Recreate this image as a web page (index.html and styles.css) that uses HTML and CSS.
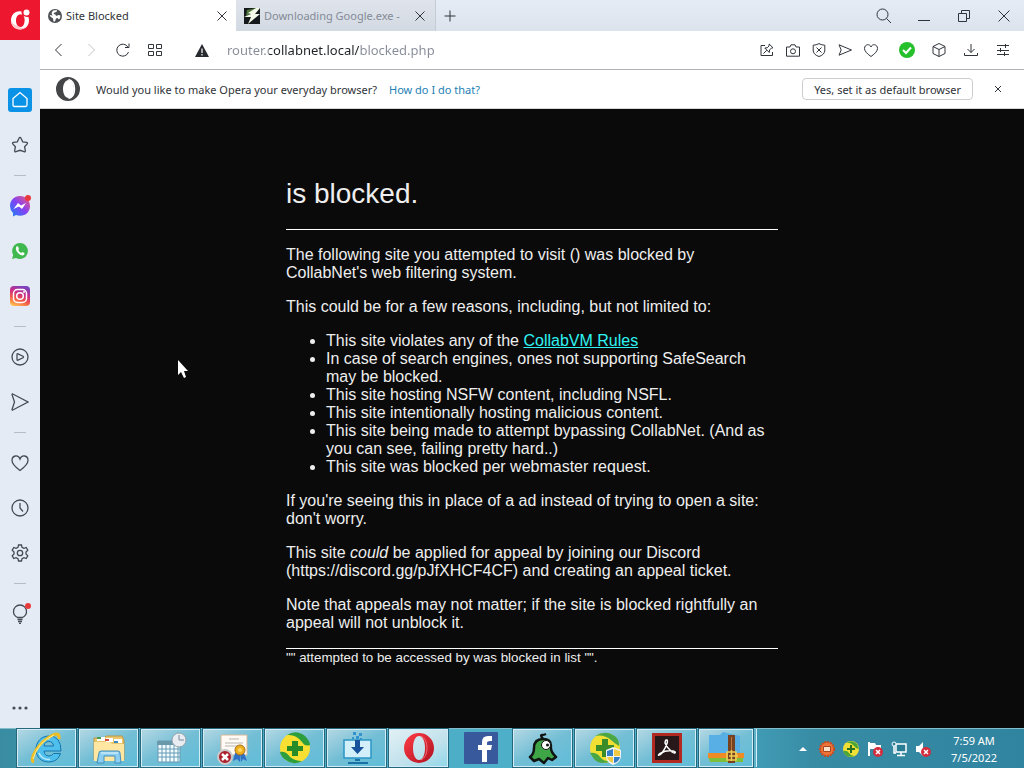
FILE: index.html
```html
<!DOCTYPE html>
<html lang="en">
  <head>
    <meta charset="UTF-8" />
    <meta name="viewport" content="width=device-width, initial-scale=1.0" />
    <title>Site Blocked</title>
    <link rel="stylesheet" href="styles.css">
  </head>
  <body>
    <div class="browser">
      <nav class="sidebar">
        <button class="opera-menu" aria-label="Opera menu">
          <svg width="40" height="40" viewBox="0 0 40 40">
            <path fill="#fff" fill-rule="evenodd" d="M21.500 11.500C14.500 10.500 11 15.500 11 20.500C11 25.500 15 29.500 20 29.500C25.500 29.500 29 25.500 29 20.500Q29 18.500 28.300 16.800Q25 17.500 23.500 15.500C24.800 18 24.800 20 24.500 22C24 25.500 22.500 27 20.500 27C17.500 27 16 24 16 20.500C16 17 18 14.200 20.500 14.200Q21.500 14.200 22.300 14.700Q21.200 13 21.500 11.500Z"/>
            <path fill="#ffc9c9" d="M11 20.500C11 25.500 15 29.500 20 29.500Q23 29.500 25.500 27.500Q20 29 17 25.500Q13 25 11 20.500Z"/>
            <circle cx="26.500" cy="12.500" r="3" fill="#fff"/>
          </svg>
        </button>
        <button class="side-item home" aria-label="Speed Dial">
          <svg width="24" height="24" viewBox="0 0 24 24"><path d="M5 10.500L12 4.500L19 10.500V17Q19 18.500 17.500 18.500H6.500Q5 18.500 5 17Z"/></svg>
        </button>
        <button class="side-item" aria-label="Bookmarks">
          <svg width="18" height="18" viewBox="0 0 18 18"><path d="M9 1.500Q9.700 1.500 10 2.200L11.700 5.800L15.700 6.400Q17 6.800 16.200 7.900L13.600 10.700L14.300 14.700Q14.400 16.200 13 15.600L9 14.300L5 15.600Q3.600 16.200 3.700 14.700L4.400 10.700L1.800 7.900Q1 6.800 2.300 6.400L6.300 5.800L8 2.200Q8.300 1.500 9 1.500Z"/></svg>
        </button>
        <hr />
        <button class="side-item" aria-label="Messenger">
          <svg class="filled" width="22" height="22" viewBox="0 0 22 22">
            <defs><linearGradient id="messenger" x1="0" y1="1" x2="1" y2="0"><stop offset="0" stop-color="#1687fa"/><stop offset=".5" stop-color="#8142f4"/><stop offset="1" stop-color="#fa5878"/></linearGradient></defs>
            <path fill="url(#messenger)" d="M11 1C5 1 1 5.500 1 11Q1 15 4 18V21.500L7 20Q9 20.800 11 20.800C17 20.800 21 16.500 21 11S17 1 11 1Z"/>
            <path fill="#fff" d="M4.500 14L9 8L12 10.500L17 8L13 14L10 11.500Z"/>
          </svg>
          <span class="dot"></span>
        </button>
        <button class="side-item" aria-label="WhatsApp">
          <svg class="filled" width="18" height="18" viewBox="0 0 18 18">
            <path fill="#3fb94f" d="M9 1A8 8 0 1 1 5 16L1 17L2.200 13A8 8 0 0 1 9 1Z"/>
            <path fill="#fff" d="M5.500 4.500L7 4.300L8 7L7.200 8Q8 10 10.200 11L11.200 10L13.500 11L13.200 12.700Q11 14.500 7.500 11.500Q3.500 8 5.500 4.500Z"/>
          </svg>
        </button>
        <button class="side-item" aria-label="Instagram">
          <svg class="filled" width="20" height="20" viewBox="0 0 20 20">
            <defs><linearGradient id="insta" x1=".2" y1="1" x2=".6" y2="0"><stop offset="0" stop-color="#ffc253"/><stop offset=".35" stop-color="#f35a45"/><stop offset=".65" stop-color="#cb2c89"/><stop offset="1" stop-color="#7942be"/></linearGradient></defs>
            <rect width="20" height="20" rx="4" fill="url(#insta)"/>
            <rect x="3.500" y="3.500" width="13" height="13" rx="4" fill="none" stroke="#fff" stroke-width="1.500"/>
            <circle cx="10" cy="10" r="3.300" fill="none" stroke="#fff" stroke-width="1.500"/>
            <circle cx="14" cy="6" r="1" fill="#fff"/>
          </svg>
        </button>
        <hr />
        <button class="side-item" aria-label="Player">
          <svg width="18" height="18" viewBox="0 0 18 18"><circle cx="9" cy="9" r="8"/><path d="M6 6.500Q6 5.500 7 5.800L12 8.200Q13 9 12 9.800L7 12.200Q6 12.500 6 11.500Z"/></svg>
        </button>
        <button class="side-item" aria-label="My Flow">
          <svg width="18" height="18" viewBox="0 0 18 18"><path d="M1 1.500Q1 .800 1.800 1L17 9L1.800 17Q1 17.200 1 16.500L3.500 9Z"/></svg>
        </button>
        <hr />
        <button class="side-item" aria-label="Pinboards">
          <svg width="18" height="18" viewBox="0 0 18 18"><path d="M9 16.500Q1 10.500 1 6.500C1 1 7.500 .500 9 5C10.500 .500 17 1 17 6.500Q17 10.500 9 16.500Z"/></svg>
        </button>
        <button class="side-item" aria-label="History">
          <svg width="18" height="18" viewBox="0 0 18 18"><circle cx="9" cy="9" r="8"/><path d="M9 4V9L12 12.500"/></svg>
        </button>
        <button class="side-item" aria-label="Settings">
          <svg width="18" height="18" viewBox="0 0 18 18"><path d="M7.500 1H10.500L11 3.300L13 4.300L15.200 3.500L16.800 6.200L15 8V10L16.800 11.800L15.200 14.500L13 13.700L11 14.700L10.500 17H7.500L7 14.700L5 13.700L2.800 14.500L1.200 11.800L3 10V8L1.200 6.200L2.800 3.500L5 4.300L7 3.300Z"/><circle cx="9" cy="9" r="2.700"/></svg>
        </button>
        <hr />
        <button class="side-item" aria-label="Tips">
          <svg width="18" height="20" viewBox="0 0 18 20"><path d="M6.500 13.500Q2.500 11.500 2.500 7.500A6.500 6.500 0 0 1 15.500 7.500Q15.500 11.500 11.500 13.500ZM6.500 15.500H11.500M7 17.500H11M8 19.500H10"/></svg>
          <span class="dot"></span>
        </button>
        <button class="side-item more" aria-label="More">
          <svg class="filled" width="18" height="4" viewBox="0 0 18 4"><circle cx="3" cy="2" r="1.600"/><circle cx="9" cy="2" r="1.600"/><circle cx="15" cy="2" r="1.600"/></svg>
        </button>
      </nav>

      <div class="main">
        <header class="tab-strip">
          <div class="tab active">
            <svg class="favicon" width="14" height="14" viewBox="0 0 14 14"><circle cx="7" cy="7" r="7" fill="#4c4f53"/><path fill="#fff" d="M5 1.500L9 1L8.500 3L6.500 3.500L5.500 5L7.500 5.500L8 7L10.500 6L12.500 6.500Q12.500 9 11 10.500L9.500 9L8 9.500L7 12.500H5.500L5 9.500L3 8L1.500 6.500L3 6L4.500 7L3.500 4Z"/></svg>
            <span class="tab-title">Site Blocked</span>
            <button class="tab-close" aria-label="Close tab"><svg width="10" height="10" viewBox="0 0 10 10"><path d="M.500 .500L9.500 9.500M9.500 .500L.500 9.500"/></svg></button>
          </div>
          <div class="tab">
            <svg class="favicon" width="16" height="16" viewBox="0 0 16 16"><rect width="16" height="16" fill="#151b1d"/><path fill="#51773f" d="M3 2L12 0L9 5L2 8Z"/><path fill="#f4fbe9" d="M12 0H16L11 6H16L4 16L7 9H0L7 6L4 5Z"/></svg>
            <span class="tab-title">Downloading Google.exe -</span>
            <button class="tab-close" aria-label="Close tab"><svg width="10" height="10" viewBox="0 0 10 10"><path d="M.500 .500L9.500 9.500M9.500 .500L.500 9.500"/></svg></button>
          </div>
          <button class="new-tab" aria-label="New tab"><svg width="12" height="12" viewBox="0 0 12 12"><path d="M6 .500V11.500M.500 6H11.500"/></svg></button>
          <div class="window-controls">
            <button aria-label="Search tabs"><svg width="16" height="16" viewBox="0 0 16 16"><circle cx="6.500" cy="6.500" r="5.500"/><path d="M10.500 10.500L15 15"/></svg></button>
            <button aria-label="Minimize"><svg width="12" height="12" viewBox="0 0 12 12"><path d="M0 10.500H12"/></svg></button>
            <button aria-label="Restore"><svg width="12" height="12" viewBox="0 0 12 12"><path d="M.500 3.500H8.500V11.500H.500ZM3.500 3V.500H11.500V8.500H9"/></svg></button>
            <button aria-label="Close"><svg width="12" height="12" viewBox="0 0 12 12"><path d="M.500 .500L11.500 11.500M11.500 .500L.500 11.500"/></svg></button>
          </div>
        </header>

        <div class="toolbar">
          <div class="nav-buttons">
            <button aria-label="Back"><svg width="14" height="14" viewBox="0 0 14 14"><path d="M9.500 1L3.500 7L9.500 13"/></svg></button>
            <button aria-label="Forward" disabled><svg width="14" height="14" viewBox="0 0 14 14"><path d="M4.500 1L10.500 7L4.500 13"/></svg></button>
            <button aria-label="Reload"><svg width="14" height="14" viewBox="0 0 14 14"><path d="M12.500 9A6 6 0 1 1 12 4.200M13 .500V4.500H9"/></svg></button>
            <button aria-label="Speed dial"><svg width="14" height="12" viewBox="0 0 14 12"><path d="M.500 .500H5.500V4.500H.500ZM8.500 .500H13.500V4.500H8.500ZM.500 7.500H5.500V11.500H.500ZM8.500 7.500H13.500V11.500H8.500Z"/></svg></button>
          </div>
          <svg class="warning" width="14" height="13" viewBox="0 0 14 13"><path fill="#26292e" d="M7 0L14 13H0Z"/><path d="M7 4.500V9M7 10V11.500" stroke="#fff" stroke-width="1.200"/></svg>
          <input class="address" type="text" aria-label="Address" value="router.collabnet.local/blocked.php" spellcheck="false" />
          <div class="page-tools">
            <button aria-label="Easy setup"><svg width="14" height="14" viewBox="0 0 14 14"><path d="M5 2.500H1V12.500H12.500V9M9.200 1L13 4.800L11.500 5L9.500 7L9.300 9.500L4.800 5L7.200 4.800L9 3ZM6.800 7.200L3.500 10.500"/></svg></button>
            <button aria-label="Snapshot"><svg width="14" height="13" viewBox="0 0 14 13"><path d="M.500 3H4L5 .800H9L10 3H13.500V12.200H.500Z"/><circle cx="7" cy="7.300" r="2.500"/></svg></button>
            <button aria-label="Ad blocker"><svg width="14" height="14" viewBox="0 0 14 14"><path d="M7 .600Q10 2.200 12.800 2.200V8Q12 12 7 13.500Q2 12 1.200 8V2.200Q4 2.200 7 .600ZM4.500 4.500L9.500 9.500M9.500 4.500L4.500 9.500"/></svg></button>
            <button aria-label="Send to My Flow"><svg width="14" height="12" viewBox="0 0 14 12"><path d="M1 .800L13.500 6L1 11.200L3.200 6Z"/></svg></button>
            <button aria-label="Add to pinboard"><svg width="14" height="13" viewBox="0 0 14 13"><path d="M7 12.500Q.500 8 .500 4.500C.500 0 6 -.500 7 3C8 -.500 13.500 0 13.500 4.500Q13.500 8 7 12.500Z"/></svg></button>
          </div>
          <div class="extensions">
            <button aria-label="Protection"><svg width="16" height="16" viewBox="0 0 16 16"><circle cx="8" cy="8" r="8" fill="#27c02d" stroke="none"/><path d="M4 8L7 11L12 5.500" stroke="#fff" stroke-width="2"/></svg></button>
            <button aria-label="Extensions"><svg width="14" height="14" viewBox="0 0 14 14"><path d="M7 .500L13 3.500V10.500L7 13.500L1 10.500V3.500ZM1 3.500L7 6.500L13 3.500M7 6.500V13.500"/></svg></button>
            <button aria-label="Downloads"><svg width="14" height="12" viewBox="0 0 14 12"><path d="M7 0V8.500M3.500 5L7 8.500L10.500 5M.500 9V11.500H13.500V9"/></svg></button>
            <button aria-label="Menu"><svg width="12" height="12" viewBox="0 0 12 12"><path d="M0 1.500H12M0 6.500H12M0 10.500H12M8.500 0V4M3.500 4V8M7.500 8V12"/></svg></button>
          </div>
        </div>

        <div class="default-bar">
          <svg class="opera-mark" width="24" height="24" viewBox="0 0 24 24"><path fill="#434547" fill-rule="evenodd" d="M12 0A12 12 0 1 0 12 24A12 12 0 1 0 12 0ZM12.500 3C16 3 18 7 18 12S16 21 12.500 21C9.500 21 7 17 7 12S9.500 3 12.500 3Z"/><path d="M12.500 2.500Q18.500 4 18.500 12T12.500 21.500" fill="none" stroke="#fff" stroke-width="1.500"/></svg>
          <span>Would you like to make Opera your everyday browser?</span>
          <a class="how" href="#">How do I do that?</a>
          <button class="set-default">Yes, set it as default browser</button>
          <button class="dismiss" aria-label="Dismiss"><svg width="6" height="6" viewBox="0 0 6 6"><path d="M0 0L6 6M6 0L0 6"/></svg></button>
        </div>

        <main class="page">
          <article>
            <h1>is blocked.</h1>
            <hr />
            <p>The following site you attempted to visit () was blocked by CollabNet's web filtering system.</p>
            <p>This could be for a few reasons, including, but not limited to:</p>
            <ul>
              <li>This site violates any of the <a href="#">CollabVM Rules</a></li>
              <li>In case of search engines, ones not supporting SafeSearch may be blocked.</li>
              <li>This site hosting NSFW content, including NSFL.</li>
              <li>This site intentionally hosting malicious content.</li>
              <li>This site being made to attempt bypassing CollabNet. (And as you can see, failing pretty hard..)</li>
              <li>This site was blocked per webmaster request.</li>
            </ul>
            <p>If you're seeing this in place of a ad instead of trying to open a site: don't worry.</p>
            <p>This site <em>could</em> be applied for appeal by joining our Discord (https://discord.gg/pJfXHCF4CF) and creating an appeal ticket.</p>
            <p>Note that appeals may not matter; if the site is blocked rightfully an appeal will not unblock it.</p>
            <hr />
            <small>"" attempted to be accessed by was blocked in list "".</small>
          </article>
        </main>
      </div>
    </div>

    <footer class="taskbar">
      <div class="apps">
        <button class="app" aria-label="Internet Explorer">
          <svg width="34" height="34" viewBox="0 0 34 34">
            <path fill="#4fc0ee" stroke="#1675ad" fill-rule="evenodd" d="M31 20H14Q14.500 25 19 25Q22 25 23.500 22.500H30.500Q27.500 31 19 31C11 31 6 26 6 18.500S11 5 19 5Q31 5 31 20ZM14 15H23.500Q23 10.500 18.800 10.500T14 15Z"/>
            <path fill="none" stroke="#bdeafb" stroke-width="1.500" d="M9 16Q11 8 20 7.500M9 22Q12 29 20 28.500"/>
            <path fill="none" stroke="#edbd22" stroke-width="3" d="M4 31C-2 29 9 11 21 5Q30 0 29 8"/>
            <path fill="none" stroke="#fff09a" d="M3 28Q8 11 24 4"/>
          </svg>
        </button>
        <button class="app" aria-label="File Explorer">
          <svg width="34" height="34" viewBox="0 0 34 34">
            <path fill="#e9c66c" stroke="#b99749" d="M2 7H12L14 5H30L32 9V29H2Z"/>
            <path fill="#fff" d="M5 6H13V10H5ZM14 7H21V11H14ZM22 8H30V12H22Z"/>
            <path fill="#4d9e45" d="M5 6H9V8H5Z"/><path fill="#d34b3a" d="M13 8H17V10H13Z"/><path fill="#3989c3" d="M22 10H26V12H22Z"/>
            <path fill="#ffe7a2" d="M2 11H18L20 13H32V30H2Z"/>
            <path fill="#8dcff0" stroke="#408dbb" d="M7 22Q7 20 9 20H26Q28 20 28 22L29 32H23V25H12V32H5Z"/>
            <path stroke="#e3f7ff" d="M9 22H26"/>
          </svg>
        </button>
        <button class="app" aria-label="Task Scheduler">
          <svg width="34" height="34" viewBox="0 0 34 34">
            <path fill="#f3fbff" stroke="#6699b3" d="M4 10H26V31H4Z"/><path fill="#6998aa" d="M3 10H26V14H3Z"/>
            <path stroke="#659cb5" d="M8 14V31M12 14V31M16 14V31M20 14V31M24 14V31M4 18H26M4 22H26M4 26H26"/>
            <circle cx="25" cy="9" r="7" fill="#e9edf1" stroke="#8fa0ac"/><path stroke="#788899" d="M25 4V9H30" fill="none"/>
          </svg>
        </button>
        <button class="app" aria-label="Certificates">
          <svg width="34" height="34" viewBox="0 0 34 34">
            <path fill="#fffaf4" stroke="#d6b89a" d="M5 4H31V24H5Z"/><path stroke="#b6b5b0" d="M13 8H23M9 12H27M9 15H22"/>
            <path fill="#306fc6" d="M19 22H24V31L21 28L17 30ZM24 22H28L31 30L27 28L25 31Z"/><circle cx="24" cy="19" r="5" fill="#edae20" stroke="#a97014"/><circle cx="24" cy="19" r="2" fill="#ffd961"/>
            <circle cx="9" cy="26" r="7" fill="#ac1e2b" stroke="#c9c7ca" stroke-width="2"/><path d="M6 23L12 29M12 23L6 29" stroke="#fff" stroke-width="2.500"/>
          </svg>
        </button>
        <button class="app" aria-label="360 Total Security">
          <svg width="34" height="34" viewBox="0 0 34 34">
            <circle cx="17" cy="17" r="15" fill="#f8df31"/><path fill="#2d9e3d" d="M9 4Q18 -2 27 5Q32 10 32 14Q27 16 24 11Q18 3 9 4ZM2 21Q8 20 12 26Q17 30 24 30Q15 35 8 29Q3 26 2 21Z"/><path fill="#278b28" d="M14 10H20V15H25V20H20V25H14V20H9V15H14Z"/>
          </svg>
        </button>
        <button class="app" aria-label="Downloader">
          <svg width="34" height="34" viewBox="0 0 34 34">
            <path fill="#d3effa" stroke="#2b96c5" stroke-width="1.500" d="M4 9H31V27H4Z"/><path fill="#1870a5" d="M15 28H20V30H15ZM8 31H28V33H8Z"/>
            <path fill="#17519b" d="M15 9H20V16H24L17.500 23L11 16H15Z"/><path fill="#3293cd" d="M13 1H16V4H13ZM19 2H22V5H19ZM16 5H19V8H16ZM20 7H22V9H20ZM12 6H14V8H12Z"/>
          </svg>
        </button>
        <button class="app current" aria-label="Opera">
          <svg width="34" height="34" viewBox="0 0 34 34"><defs><linearGradient id="opera" x2="1" y2="1"><stop stop-color="#ff3d46"/><stop offset="1" stop-color="#af1020"/></linearGradient></defs><path fill="url(#opera)" fill-rule="evenodd" d="M17 2A15 15 0 1 0 17 32A15 15 0 1 0 17 2ZM17 5C21 5 23 11 23 17S21 29 17 29S11 23 11 17S13 5 17 5Z"/><path fill="none" stroke="#f26c72" d="M19 5Q25 8 25 17T19 29"/></svg>
        </button>
        <button class="app pinned" aria-label="Facebook">
          <svg width="34" height="32" viewBox="0 0 34 32"><rect width="34" height="32" rx="1" fill="#38599b"/><path fill="#fff" d="M18 30V18H14V13H18V10Q18 4 24 4H28V9H26Q23 9 23 11V13H28L27 18H23V30Z"/></svg>
        </button>
        <button class="app" aria-label="Brainslug">
          <svg width="34" height="34" viewBox="0 0 34 34">
            <path fill="none" stroke="#101412" stroke-width="2.500" d="M17 8Q14 4 16 4T20 3"/>
            <path fill="#3fa648" stroke="#101412" stroke-width="2.500" stroke-linejoin="round" d="M8 17Q8 8 17 8Q25 8 25 15Q24 20 30 26L26 29L22 27L18 32L13 28L8 30L4 26Q8 23 8 17Z"/>
            <circle cx="20" cy="14" r="4.500" fill="#fff" stroke="#101412"/><circle cx="21.500" cy="14" r="1.500" fill="#101412"/>
          </svg>
        </button>
        <button class="app" aria-label="360 installer">
          <svg width="34" height="34" viewBox="0 0 34 34">
            <circle cx="17" cy="17" r="15" fill="#f2df34"/><path fill="#4ba744" d="M7 5Q18 -2 28 6Q32 10 31 15Q26 12 23 9Q16 3 7 5ZM2 22Q9 21 13 27Q17 31 24 30Q12 35 6 28Z"/><path fill="#398c28" d="M14 8H20V14H26V20H20V26H14V20H8V14H14Z"/>
            <path fill="#eef3f6" d="M25 16L33 19V25Q33 31 25 34Q18 31 18 25V19Z"/><path fill="#327fc8" d="M25 18V25H19V20ZM26 26H32Q31 31 26 32Z"/><path fill="#f0c944" d="M26 18L32 20V25H26ZM19 26H25V32Q20 30 19 26Z"/>
          </svg>
        </button>
        <button class="app" aria-label="Adobe Reader">
          <svg width="30" height="30" viewBox="0 0 30 30"><path fill="#281819" stroke="#b22922" stroke-width="3" d="M1.500 1.500H28.500V28.500H1.500Z"/><path fill="none" stroke="#fff" stroke-width="1.500" d="M14 7C17 6 15 13 10 20C6 24 5 22 9 20Q14 17 21 18C25 19 23 21 20 19Q15 15 13 10Q13 8 14 7Z"/></svg>
        </button>
        <button class="app stacked" aria-label="Archive">
          <svg width="36" height="34" viewBox="0 0 36 34"><path fill="#58afe5" d="M1 4H12L15 1L32 5V25H1Z"/><path fill="#7dbf3b" d="M0 25H35V31H2Z"/><path fill="#ef8b25" d="M0 22H36V27H0Z"/><path fill="#764222" d="M20 4H27V32H20Z"/><path stroke="#b8793f" d="M23.500 6V19"/><path fill="none" stroke="#efd053" stroke-width="1.500" d="M19 21H28V29H19ZM23.500 19V30M21 25H30"/></svg>
        </button>
      </div>
      <div class="tray">
        <button aria-label="Show hidden icons"><svg width="8" height="4" viewBox="0 0 8 4"><path fill="#fff" d="M4 0L8 4H0Z"/></svg></button>
        <button aria-label="VM tools"><svg width="16" height="16" viewBox="0 0 16 16"><circle cx="8" cy="8" r="7" fill="#ed7436" stroke="#cb4a1f" stroke-width="2" stroke-dasharray="2 1"/><path fill="#ffe2c9" stroke="#a94421" d="M4.500 5.500H11.500V10.500H4.500Z"/></svg></button>
        <button aria-label="360 protection"><svg width="16" height="16" viewBox="0 0 16 16"><circle cx="8" cy="8" r="8" fill="#f1df38"/><path fill="#4ca636" d="M3 2Q9 -2 14 3L16 8Q12 7 10 4Q7 1 3 2ZM0 10Q4 9 6 12T12 15Q3 18 0 10Z"/><path fill="#286f22" d="M7 4H9V7H12V9H9V12H7V9H4V7H7Z"/></svg></button>
        <button aria-label="Action Center"><svg width="16" height="16" viewBox="0 0 16 16"><path fill="#fff" d="M1 1H3V2H8L9 4H14V10H8L7 8H3V15H1Z"/><circle cx="11" cy="11" r="5" fill="#d42c3c"/><path d="M9 9L13 13M13 9L9 13" stroke="#fff" stroke-width="1.500"/></svg></button>
        <button aria-label="Network"><svg width="16" height="16" viewBox="0 0 16 16"><path fill="#287c94" stroke="#fff" stroke-width="1.500" d="M5 3H15V11H5Z"/><path fill="none" stroke="#fff" stroke-width="1.500" d="M10 11V14M6 14.500H14M3 5V12H5"/><circle cx="3" cy="3" r="2" fill="#287c94" stroke="#fff"/></svg></button>
        <button aria-label="Volume muted"><svg width="16" height="16" viewBox="0 0 16 16"><path fill="#fff" d="M1 5H4L8 1V15L4 11H1Z"/><circle cx="11" cy="11" r="5" fill="#d42c3c"/><path d="M9 9L13 13M13 9L9 13" stroke="#fff" stroke-width="1.500"/></svg></button>
        <time class="clock" datetime="2022-07-05T07:59">7:59 AM<br>7/5/2022</time>
      </div>
    </footer>

    <svg class="pointer" width="12" height="18" viewBox="0 0 12 18"><path fill="#fff" d="M1 0V15L4 12L7 18L9 17L7 11H11Z"/></svg>
  </body>
</html>
```
FILE: styles.css
```css
* {
  box-sizing: border-box;
}
body {
  margin: 0;
  min-height: 100vh;
  display: flex;
  flex-direction: column;
  background: #0a0a0a;
  font-family: "Noto Sans", "Segoe UI", sans-serif;
  font-size: 11px;
  color: #303338;
}
button {
  display: flex;
  align-items: center;
  justify-content: center;
  margin: 0;
  padding: 0;
  border: none;
  background: none;
  font: inherit;
  color: inherit;
}
svg {
  display: block;
  flex: none;
}
.browser {
  flex: 1;
  display: flex;
}
.main {
  flex: 1;
  min-width: 0;
  display: flex;
  flex-direction: column;
}

/* sidebar */
.sidebar {
  width: 40px;
  display: flex;
  flex-direction: column;
  background: #e4ebf4;
}
.opera-menu {
  height: 40px;
  margin-bottom: 37px;
  background: #ee1730;
}
.side-item {
  position: relative;
  height: 45px;
}
.side-item svg {
  fill: none;
  stroke: #454b57;
  stroke-width: 1.3;
}
.side-item svg.filled {
  fill: #454b57;
  stroke: none;
}
.home svg {
  background: #0a92e6;
  border-radius: 3px;
  stroke: #fff;
}
.sidebar hr {
  width: 12px;
  margin: 8px auto 7px;
  border: none;
  border-top: 1px solid #b5bdc8;
}
.dot {
  position: absolute;
  top: 12px;
  right: 9px;
  width: 6px;
  height: 6px;
  border-radius: 50%;
  background: #e83a3a;
}
.more {
  height: 40px;
  margin-top: auto;
}

/* tabs */
.tab-strip {
  display: flex;
  height: 31px;
  background: linear-gradient(#e6ecf5, #dde3ec);
}
.tab {
  display: flex;
  align-items: center;
  width: 200px;
  padding: 0 10px 0 8px;
  color: #848b97;
  background: linear-gradient(#dfe4ec, #d3d9e2);
  border-right: 1px solid #c5cbd5;
}
.tab.active {
  width: 196px;
  padding: 0 9px 0 8px;
  color: #303338;
  background: #fff;
  border: none;
}
.tab-title {
  flex: 1;
  margin: 0 8px 0 4px;
  overflow: hidden;
  white-space: nowrap;
}
.tab-close svg,
.new-tab svg,
.window-controls svg,
.toolbar button svg,
.dismiss svg {
  fill: none;
  stroke: #30343b;
}
.new-tab {
  width: 27px;
}
.window-controls {
  display: flex;
  margin-left: auto;
}
.window-controls button {
  width: 40px;
}

/* toolbar */
.toolbar {
  display: flex;
  align-items: center;
  height: 39px;
  padding: 0 5px 0 3px;
  background: #fff;
  border-bottom: 1px solid #aeb1b5;
}
.nav-buttons,
.page-tools,
.extensions {
  display: flex;
}
.nav-buttons button,
.extensions button {
  width: 32px;
  height: 32px;
}
.nav-buttons button:disabled {
  opacity: 0.3;
}
.page-tools button {
  width: 26px;
  height: 32px;
}
.extensions {
  margin-left: 7px;
}
.warning {
  margin: 0 18px 0 24px;
}
.address {
  flex: 1;
  min-width: 0;
  height: 28px;
  padding: 0;
  border: none;
  outline: none;
  font-family: inherit;
  font-size: 13px;
  /* host name is darker than the rest of the url */
  color: transparent;
  caret-color: #303338;
  background: linear-gradient(90deg, #868c97 42px, #202226 42px, #202226 132px, #868c97 132px);
  -webkit-background-clip: text;
  background-clip: text;
}

/* default browser prompt */
.default-bar {
  display: flex;
  align-items: center;
  height: 39px;
  padding: 0 16px;
  background: #fff;
  border-bottom: 1px solid #d5d7da;
}
.opera-mark {
  margin-right: 16px;
}
.how {
  margin-left: 12px;
  color: #2581b5;
  text-decoration: none;
}
.set-default {
  height: 22px;
  margin-left: auto;
  padding: 0 11px;
  border: 1px solid #cbced1;
  border-radius: 4px;
}
.dismiss {
  width: 20px;
  height: 20px;
  margin-left: 15px;
}

/* blocked page */
.page {
  flex: 1;
  background: #0a0a0a;
  color: #eee;
  font-family: Arial, "Liberation Sans", sans-serif;
  font-size: 16px;
  line-height: 18px;
}
article {
  width: 50%;
  margin: 68px auto 60px;
}
h1 {
  margin: 0 0 18px;
  font-size: 28px;
  font-weight: normal;
  line-height: 34px;
}
article hr {
  margin: 0;
  border: none;
  border-top: 1px solid #fff;
}
article p,
article ul {
  margin: 16px 0;
}
article a {
  color: #2ff3f3;
}
small {
  display: block;
  font-size: smaller;
}

/* taskbar */
.taskbar {
  display: flex;
  justify-content: space-between;
  height: 40px;
  padding-left: 17px;
  background: linear-gradient(90deg, #398ca2, #4ba9c2 20%, #4fb2cd 65%, #378ba3 80%, #3184a0);
  border-top: 1px solid #83bdca;
}
.apps {
  display: flex;
  gap: 3px;
}
.app {
  width: 59px;
  height: 38px;
  border: 1px solid #d2edf5;
  outline: 1px solid #25677d;
  background: linear-gradient(150deg, #b2d7e3, #72bed5 50%, #60bdd8);
}
.current {
  background: linear-gradient(150deg, #e1f0f5, #c0e1ec 60%, #91d7e9);
}
.pinned {
  border: none;
  outline: none;
  background: none;
}
.stacked {
  width: 54px;
  box-shadow: 3px 0 #5fb3ca, 4px 0 #d2edf5;
}
.tray {
  display: flex;
  align-items: center;
  color: #fff;
}
.tray button {
  width: 24px;
  height: 24px;
}
.clock {
  width: 89px;
  padding-right: 11px;
  line-height: 17px;
  text-align: center;
}

.pointer {
  position: absolute;
  left: 177px;
  top: 360px;
}
```
